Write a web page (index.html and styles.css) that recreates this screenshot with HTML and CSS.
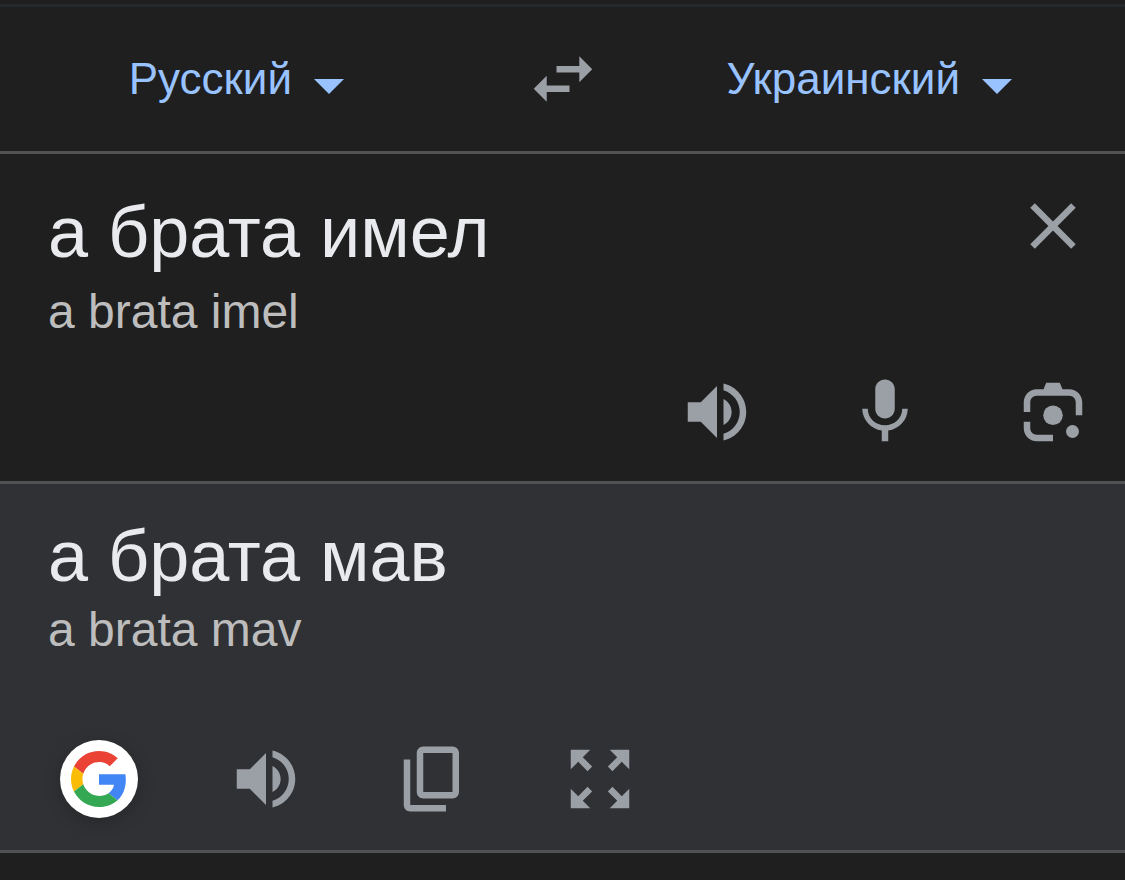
FILE: index.html
```html
<!DOCTYPE html>
<html lang="ru">
  <head>
    <meta charset="UTF-8" />
    <meta name="viewport" content="width=device-width, initial-scale=1.0" />
    <title>Переводчик</title>
    <link rel="stylesheet" href="styles.css">
  </head>
  <body>
    <header class="lang-bar">
      <label class="lang">
        <select aria-label="Русский">
          <option>Русский</option>
        </select>
        <svg class="arrow" viewBox="0 0 30 15"><path d="M0 0h30L15 15z"/></svg>
      </label>
      <button class="icon-btn" aria-label="⇄">
        <svg class="icon" viewBox="0 0 24 24"><path d="M6.99 11L3 15l3.99 4v-3H14v-2H6.99v-3zM21 9l-3.99-4v3H10v2h7.01v3L21 9z"/></svg>
      </button>
      <label class="lang">
        <select aria-label="Украинский">
          <option>Украинский</option>
        </select>
        <svg class="arrow" viewBox="0 0 30 15"><path d="M0 0h30L15 15z"/></svg>
      </label>
    </header>

    <section class="panel source">
      <div class="panel-top">
        <textarea class="phrase" rows="1" spellcheck="false" aria-label="Русский">а брата имел</textarea>
        <button class="icon-btn" aria-label="✕">
          <svg class="icon" viewBox="0 0 24 24"><path d="M19 6.41L17.59 5 12 10.59 6.41 5 5 6.41 10.59 12 5 17.59 6.41 19 12 13.41 17.59 19 19 17.59 13.41 12z"/></svg>
        </button>
      </div>
      <p class="translit">a brata imel</p>
      <div class="tools">
        <button class="icon-btn" aria-label="🔊">
          <svg class="icon" viewBox="0 0 24 24"><path d="M3 9v6h4l5 5V4L7 9H3zm13.5 3c0-1.77-1.02-3.29-2.5-4.03v8.05c1.48-.73 2.5-2.25 2.5-4.02zM14 3.23v2.06c2.89.86 5 3.54 5 6.71s-2.11 5.85-5 6.71v2.06c4.01-.91 7-4.49 7-8.77s-2.99-7.86-7-8.77z"/></svg>
        </button>
        <button class="icon-btn" aria-label="🎤">
          <svg class="icon" viewBox="0 0 24 24"><path d="M12 14c1.66 0 3-1.34 3-3V5c0-1.66-1.34-3-3-3S9 3.34 9 5v6c0 1.66 1.34 3 3 3zm5.3-3c0 3-2.54 5.1-5.3 5.1S6.7 14 6.7 11H5c0 3.41 2.72 6.23 6 6.72V21h2v-3.28c3.28-.48 6-3.3 6-6.72h-1.7z"/></svg>
        </button>
        <button class="icon-btn" aria-label="📷">
          <svg class="icon" viewBox="0 0 24 24">
            <path d="M3 12V9c0-2.2 1.8-4 4-4h2.1l.8-2h4.2l.8 2H17c2.2 0 4 1.8 4 4v4h-2V9c0-1.1-.9-2-2-2H7c-1.1 0-2 .9-2 2v3zM3 15h2v2c0 1.1.9 2 2 2h5v2H7c-2.2 0-4-1.8-4-4z"/>
            <circle cx="12" cy="13" r="3"/>
            <circle cx="18" cy="18" r="2"/>
          </svg>
        </button>
      </div>
    </section>

    <section class="panel result">
      <div class="panel-top">
        <p class="phrase" lang="uk">а брата мав</p>
      </div>
      <p class="translit">a brata mav</p>
      <div class="tools">
        <button class="icon-btn google" aria-label="Google">
          <svg viewBox="0 0 48 48">
            <path fill="#ea4335" d="M24 9.5c3.54 0 6.71 1.22 9.21 3.6l6.85-6.85C35.9 2.38 30.47 0 24 0 14.62 0 6.51 5.38 2.56 13.22l7.98 6.19C12.43 13.72 17.74 9.5 24 9.5z"/>
            <path fill="#4285f4" d="M46.98 24.55c0-1.57-.15-3.09-.38-4.55H24v9.02h12.94c-.58 2.96-2.26 5.48-4.78 7.18l7.73 6c4.51-4.18 7.09-10.36 7.09-17.65z"/>
            <path fill="#fbbc05" d="M10.53 28.59c-.48-1.45-.76-2.99-.76-4.59s.27-3.14.76-4.59l-7.98-6.19C.92 16.46 0 20.12 0 24c0 3.88.92 7.54 2.56 10.78l7.97-6.19z"/>
            <path fill="#34a853" d="M24 48c6.48 0 11.93-2.13 15.89-5.81l-7.73-6c-2.15 1.45-4.92 2.3-8.16 2.3-6.26 0-11.57-4.22-13.47-9.91l-7.98 6.19C6.51 42.62 14.62 48 24 48z"/>
          </svg>
        </button>
        <button class="icon-btn" aria-label="🔊">
          <svg class="icon" viewBox="0 0 24 24"><path d="M3 9v6h4l5 5V4L7 9H3zm13.5 3c0-1.77-1.02-3.29-2.5-4.03v8.05c1.48-.73 2.5-2.25 2.5-4.02zM14 3.23v2.06c2.89.86 5 3.54 5 6.71s-2.11 5.85-5 6.71v2.06c4.01-.91 7-4.49 7-8.77s-2.99-7.86-7-8.77z"/></svg>
        </button>
        <button class="icon-btn" aria-label="⧉">
          <svg class="icon" viewBox="0 0 24 24"><path d="M18 2H9c-1.1 0-2 .9-2 2v12c0 1.1.9 2 2 2h9c1.1 0 2-.9 2-2V4c0-1.1-.9-2-2-2zm0 14H9V4h9v12zM3 6h2v14h11v2H5c-1.1 0-2-.9-2-2z"/></svg>
        </button>
        <button class="icon-btn" aria-label="⤢">
          <svg class="icon" viewBox="0 0 24 24"><path d="M15 3l2.3 2.3-2.89 2.87 1.42 1.42L18.7 6.7 21 9V3zM3 9l2.3-2.3 2.87 2.89 1.42-1.42L6.7 5.3 9 3H3zm6 12l-2.3-2.3 2.89-2.87-1.42-1.42L5.3 17.3 3 15v6zm12-6l-2.3 2.3-2.87-2.89-1.42 1.42 2.89 2.87L15 21h6z"/></svg>
        </button>
      </div>
    </section>
  </body>
</html>
```

FILE: styles.css
```css
* {
  box-sizing: border-box;
}
body {
  font-family: "Liberation Sans", Arial, sans-serif;
  background-color: #1f1f1f;
  color: #e8eaed;
  margin: 0;
  padding: 4px 0 0;
}
p {
  margin: 0;
}
.lang-bar {
  display: grid;
  grid-template-columns: 42% 16% 38.5%;
  align-items: center;
  justify-items: center;
  border-top: 3px solid #272a2d;
  border-bottom: 3px solid #505254;
  padding: 33px 0;
}
.lang {
  display: flex;
  align-items: baseline;
  gap: 21px;
  cursor: pointer;
}
.lang select {
  appearance: none;
  background: none;
  border: none;
  padding: 0;
  margin: 0;
  font-family: inherit;
  font-size: 44px;
  line-height: 52px;
  color: #99c3ff;
  cursor: pointer;
}
.arrow {
  width: 30px;
  height: 15px;
  fill: #99c3ff;
}
.icon-btn {
  display: flex;
  align-items: center;
  justify-content: center;
  flex: none;
  width: 78px;
  height: 78px;
  padding: 0;
  background: none;
  border: none;
  cursor: pointer;
}
.icon {
  width: 78px;
  height: 78px;
  fill: #9aa0a6;
}
.panel {
  border-bottom: 3px solid #505254;
}
.source {
  padding: 33px 33px 30px 48px;
}
.result {
  background-color: #303134;
  padding: 27px 33px 32px 48px;
}
.panel-top {
  display: flex;
  align-items: flex-start;
}
.phrase {
  flex: 1;
  min-width: 0;
  display: block;
  height: 90px;
  padding: 0;
  border: none;
  outline: none;
  resize: none;
  overflow: hidden;
  background: none;
  font-family: inherit;
  font-size: 72px;
  line-height: 90px;
  color: #e8eaed;
}
.translit {
  font-size: 48px;
  line-height: 56px;
  color: #bdbdbd;
}
.source .translit {
  margin-top: 7px;
}
.result .translit {
  margin-top: 1px;
}
.tools {
  display: flex;
  align-items: center;
}
.source .tools {
  justify-content: flex-end;
  gap: 90px;
  margin-top: 33px;
}
.result .tools {
  gap: 89px;
  margin-top: 82px;
  padding-left: 12px;
}
.google {
  background: #fff;
  border-radius: 50%;
  box-shadow: 0 4px 18px rgba(0, 0, 0, 0.2);
}
.google svg {
  width: 56px;
  height: 56px;
}
```
